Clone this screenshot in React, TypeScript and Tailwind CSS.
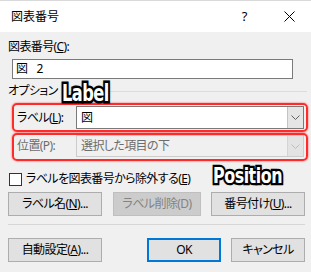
import React from "react";

const Chevron = ({ color }: { color: string }) => (
  <svg width="9" height="5" viewBox="0 0 9 5" fill="none">
    <path d="M0.5 0.5 L4.5 4.5 L8.5 0.5" stroke={color} strokeWidth="1" />
  </svg>
);

const Btn = ({
  w,
  children,
  disabled,
  primary,
  className = "",
}: {
  w: string;
  children: React.ReactNode;
  disabled?: boolean;
  primary?: boolean;
  className?: string;
}) => (
  <div
    className={
      "h-[24px] flex items-center justify-center " +
      w +
      " " +
      (disabled
        ? "bg-[#cccccc] border border-[#bfbfbf] text-[#838383] "
        : primary
        ? "bg-[#e1e1e1] border-2 border-[#0078d7] "
        : "bg-[#e1e1e1] border border-[#adadad] ") +
      className
    }
  >
    {children}
  </div>
);

const Annot = ({ text, className }: { text: string; className: string }) => (
  <div
    className={
      "absolute font-['DejaVu_Sans_Condensed','DejaVu_Sans',sans-serif] font-black text-white leading-none tracking-[-0.5px] [paint-order:stroke_fill] [-webkit-text-stroke:4px_#000] [text-shadow:0_0_3px_rgba(0,0,0,0.6)] origin-top-left " +
      className
    }
  >
    {text}
  </div>
);

export default function App() {
  return (
    <div className="relative w-[311px] h-[272px] bg-[#f0f0f0] overflow-hidden text-[12px] text-black font-['Noto_Sans','Noto_Sans_CJK_JP',sans-serif] [font-feature-settings:'palt']">
      <div className="h-px bg-[#d9d9d9]" />
      <div className="h-[31px] bg-white flex items-center">
        <span className="ml-[11px] text-[12px]">図表番号</span>
        <div className="ml-auto w-[45px] flex justify-center text-[13px]">?</div>
        <div className="w-[44px] flex justify-center">
          <svg width="11" height="11" viewBox="0 0 11 11">
            <path d="M0.5 0.5 L10.5 10.5 M10.5 0.5 L0.5 10.5" stroke="#000" strokeWidth="1" />
          </svg>
        </div>
      </div>

      <div className="pl-[8px] pr-[6px] flex flex-col tracking-[-0.6px]">
        <div className="mt-[7px] h-[16px] leading-[16px]">
          図表番号(<span className="underline">C</span>):
        </div>
        <div className="mt-[4px] ml-[4px] w-[281px] h-[20px] border border-[#7a7a7a] bg-white flex items-center pl-[3px]">
          <span>図</span>
          <span className="ml-[9px]">2</span>
        </div>
        <div className="mt-[4px] h-[16px] flex items-center">
          <span>オプション</span>
          <div className="flex-1 h-px bg-[#dcdcdc] ml-[6px] mr-[-2px]" />
        </div>
        <div className="mt-[7px] h-[23px] flex items-center">
          <span className="ml-[9px] w-[59px]">
            ラベル(<span className="underline">L</span>):
          </span>
          <div className="w-[228px] h-[23px] border border-[#7a7a7a] bg-white flex">
            <div className="flex-1 flex items-center pl-[4px]">図</div>
            <div className="w-[16px] bg-[#e5e5e5] border-l border-[#c4c4c4] flex items-center justify-center">
              <Chevron color="#606060" />
            </div>
          </div>
        </div>
        <div className="mt-[6px] h-[22px] flex items-center text-[#6d6d6d]">
          <span className="ml-[9px] w-[59px]">位置(P):</span>
          <div className="w-[228px] h-[22px] border border-[#cccccc] bg-[#f0f0f0] flex">
            <div className="flex-1 flex items-center pl-[4px]">選択した項目の下</div>
            <div className="w-[16px] bg-[#e3e3e3] border-l border-[#d4d4d4] flex items-center justify-center">
              <Chevron color="#bcbcbc" />
            </div>
          </div>
        </div>
        <div className="mt-[14px] h-[16px] flex items-center">
          <div className="ml-[1px] w-[13px] h-[13px] border border-[#333333] bg-white" />
          <span className="ml-[4px]">
            ラベルを図表番号から除外する(<span className="underline">E</span>)
          </span>
        </div>
        <div className="mt-[5px] flex">
          <Btn w="w-[94px]">
            ラベル名(<span className="underline">N</span>)...
          </Btn>
          <Btn w="w-[88px]" disabled className="ml-[11px]">
            ラベル削除(D)
          </Btn>
          <Btn w="w-[94px]" className="ml-[10px]">
            番号付け(<span className="underline">U</span>)...
          </Btn>
        </div>
        <div className="mt-[8px] h-px bg-[#d6d6d6]" />
        <div className="mt-[13px] flex">
          <Btn w="w-[94px]">
            自動設定(<span className="underline">A</span>)...
          </Btn>
          <Btn w="w-[74px]" primary className="ml-[45px]">
            OK
          </Btn>
          <Btn w="w-[74px]" className="ml-[10px]">
            キャンセル
          </Btn>
        </div>
      </div>

      <div className="absolute left-[12px] top-[103px] w-[296px] h-[29px] rounded-[5px] border-2 border-[#ff2a2a] shadow-[0_0_2px_#ff4040]" />
      <div className="absolute left-[12px] top-[133px] w-[296px] h-[28px] rounded-[5px] border-2 border-[#ff2a2a] shadow-[0_0_2px_#ff4040]" />

      <Annot text="Label" className="left-[62px] top-[81px] text-[18px] scale-y-[1.3]" />
      <Annot text="Position" className="left-[213px] top-[165px] text-[19px] scale-x-[0.93] scale-y-[1.15]" />
    </div>
  );
}
